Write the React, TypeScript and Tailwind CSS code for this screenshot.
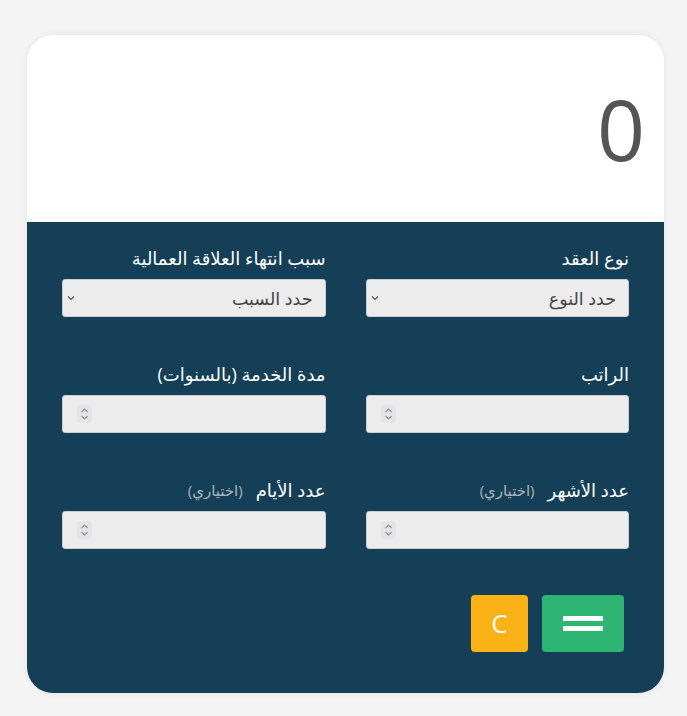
import { useState } from "react";

const font = { fontFamily: '"Open Sans", "DejaVu Sans", sans-serif' };

function Chevron() {
  return (
    <svg width="10" height="10" viewBox="0 0 10 10" className="text-[#555]">
      <path d="M2 3.5 L5 6.5 L8 3.5" fill="none" stroke="currentColor" strokeWidth="1.2" />
    </svg>
  );
}

function Spinner() {
  return (
    <span className="pointer-events-none absolute left-[15px] top-1/2 flex h-[18px] w-[15px] -translate-y-1/2 items-center justify-center rounded-sm bg-[#e3e3e8]">
      <svg width="9" height="14" viewBox="0 0 9 14" className="text-[#8f8f95]">
        <path d="M1.5 5 L4.5 2 L7.5 5 M1.5 9 L4.5 12 L7.5 9" fill="none" stroke="currentColor" strokeWidth="1.1" />
      </svg>
    </span>
  );
}

function Label({ text, hint }: { text: string; hint?: string }) {
  return (
    <div className="mb-[11px] flex h-5 items-center gap-[13px] text-[18px] leading-5 text-white">
      <span>{text}</span>
      {hint && <span className="text-[15px] text-[#a9b4bb]">{hint}</span>}
    </div>
  );
}

function SelectField({ label, placeholder }: { label: string; placeholder: string }) {
  return (
    <div>
      <Label text={label} />
      <div className="relative">
        <select className="h-[38px] w-full appearance-none rounded-[3px] border border-[#c9ccd0] bg-[#ececec] pr-3 text-[17.5px] text-[#444] outline-none">
          <option>{placeholder}</option>
        </select>
        <span className="pointer-events-none absolute left-[4px] top-1/2 -translate-y-1/2">
          <Chevron />
        </span>
      </div>
    </div>
  );
}

function NumberField({ label, hint }: { label: string; hint?: string }) {
  const [v, setV] = useState("");
  return (
    <div>
      <Label text={label} hint={hint} />
      <div className="relative">
        <input
          type="text"
          inputMode="decimal"
          value={v}
          onChange={(e) => setV(e.target.value)}
          className="h-[38px] w-full rounded-[3px] border border-[#c9ccd0] bg-[#ececec] pr-3 pl-10 text-[17px] text-[#444] outline-none"
        />
        <Spinner />
      </div>
    </div>
  );
}

export default function App() {
  return (
    <div className="min-h-[716px] bg-[#f4f4f4] pt-[35px]" style={font}>
      <div className="ml-[27px] w-[637px] overflow-hidden rounded-[26px] shadow-[0_0_6px_rgba(0,0,0,0.08)]" dir="rtl">
        <div className="flex h-[187px] items-center bg-white pr-[19px]">
          <span className="text-[84px] leading-none text-[#555]">0</span>
        </div>
        <div className="bg-[#143f57] px-[35px] pt-[26px] pb-[41px]">
          <div className="grid grid-cols-2 gap-x-10 gap-y-[47px]">
            <SelectField label="نوع العقد" placeholder="حدد النوع" />
            <SelectField label="سبب انتهاء العلاقة العمالية" placeholder="حدد السبب" />
            <NumberField label="الراتب" />
            <NumberField label="مدة الخدمة (بالسنوات)" />
            <NumberField label="عدد الأشهر" hint="(اختياري)" />
            <NumberField label="عدد الأيام" hint="(اختياري)" />
          </div>
          <div className="mt-[46px] mr-[5px] flex gap-[14px]">
            <button
              type="button"
              className="flex h-[57px] w-[82px] flex-col items-center justify-center gap-[5px] rounded-[4px] bg-[#2eb574]"
            >
              <span className="h-[5px] w-10 bg-white" />
              <span className="h-[5px] w-10 bg-white" />
            </button>
            <button
              type="button"
              className="flex h-[57px] w-[57px] items-center justify-center rounded-[4px] bg-[#fbb216] text-[26px] text-white"
            >
              C
            </button>
          </div>
        </div>
      </div>
    </div>
  );
}
